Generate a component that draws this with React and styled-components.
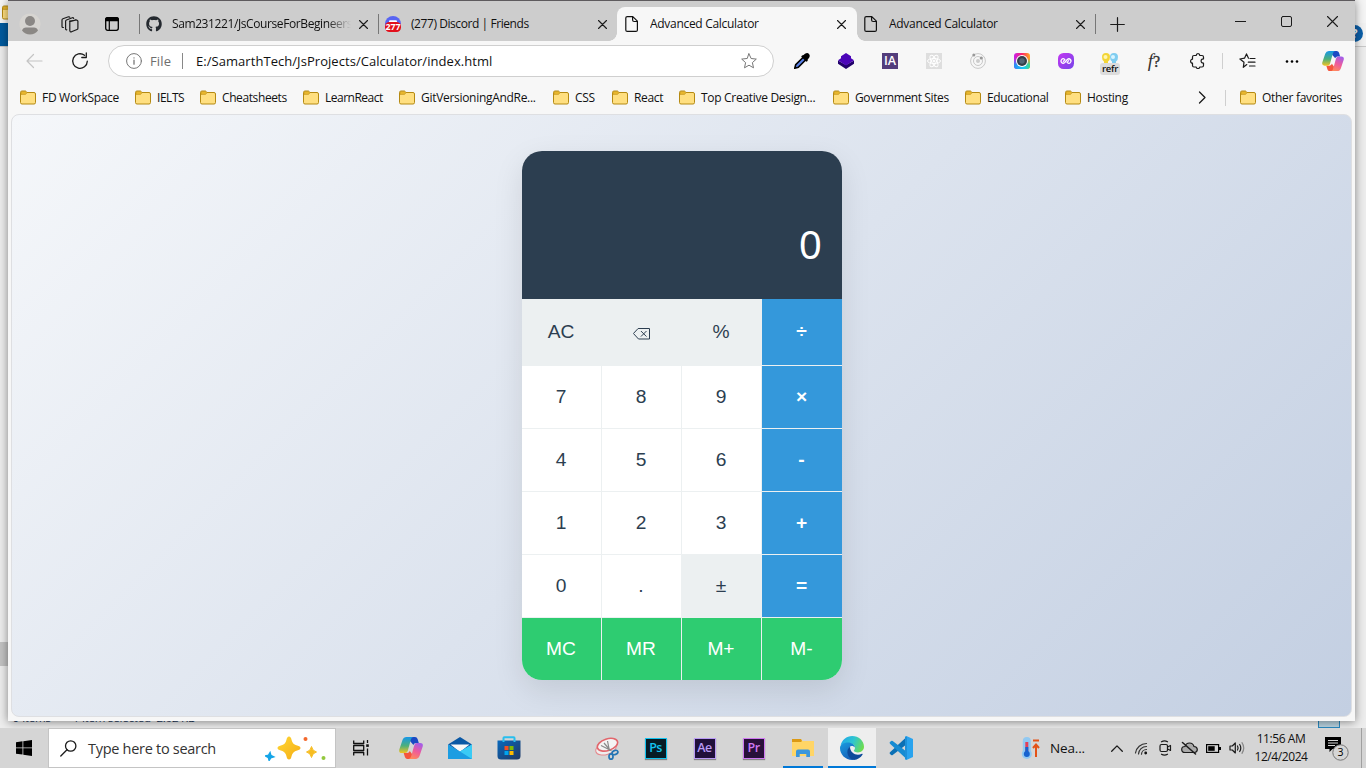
import React from "react";
import styled, { createGlobalStyle } from "styled-components";
import { FaGithub } from "react-icons/fa";

const UI = `"Open Sans", "Noto Sans", sans-serif`;

const GlobalStyle = createGlobalStyle`
  * { box-sizing: border-box; }
  body { margin: 0; overflow: hidden; }
`;

const Screen = styled.div`
  width: 1366px;
  height: 768px;
  display: flex;
  flex-direction: column;
  overflow: hidden;
  font-family: ${UI};
  color: #111;
`;

const Desktop = styled.div`
  position: relative;
  height: 728px;
  overflow: hidden;
`;

/* ---------- window behind the browser ---------- */

const Explorer = styled.div`
  height: 728px;
  display: flex;
  flex-direction: column;
  background: #ededed;
`;

const ExplorerTitle = styled.div`
  height: 23px;
  padding: 3px 0 0 2px;
  background: #f5f5f5;
`;

const ExplorerRibbon = styled.div`
  display: flex;
  justify-content: space-between;
  height: 24px;
  border-bottom: 1px solid #c9c9c9;
  background: linear-gradient(90deg, #005a9e 0 30px, #f2f2f2 30px);
`;

const HelpDot = styled.div`
  width: 17px;
  height: 17px;
  margin: 2px 3px 0 auto;
  border-radius: 50%;
  background: #0b5fa8;
  color: #fff;
  font-size: 12px;
  font-weight: 700;
  line-height: 17px;
  text-align: center;
`;

const ExplorerBody = styled.div`
  flex: 1;
  padding-top: 595px;
`;

const ScrollThumb = styled.div`
  width: 8px;
  height: 24px;
  background: #c2c2c2;
`;

const ExplorerStatus = styled.div`
  display: flex;
  align-items: flex-start;
  height: 18px;
  padding-left: 13px;
  gap: 22px;
  font-size: 11.5px;
  line-height: 16px;
  letter-spacing: -0.2px;
  color: #1e395b;
`;

const ViewToggle = styled.div`
  width: 22px;
  height: 18px;
  margin: 0 26px 0 auto;
  border: 1px solid #2a8ac0;
  background: #b9d3e0;
`;

/* ---------- browser ---------- */

const Browser = styled.div`
  position: absolute;
  left: 8px;
  top: 0;
  width: 1347px;
  height: 721px;
  display: flex;
  flex-direction: column;
  background: #f7f7f7;
  border-top: 1px solid #5e5b5e;
  box-shadow: 0 1px 9px rgba(0, 0, 0, 0.45);
`;

const TabStrip = styled.div`
  display: flex;
  align-items: flex-start;
  height: 40px;
  background: #cdcdcd;
`;

const StripButton = styled.div`
  display: flex;
  align-items: center;
  justify-content: center;
  flex: none;
  width: ${(p) => p.$w}px;
  height: ${(p) => p.$h || 46}px;
  margin-right: ${(p) => p.$gap || 0}px;
`;

const TabBox = styled.div`
  position: relative;
  display: flex;
  flex: none;
  align-items: center;
  width: ${(p) => (p.$active ? 240 : 239)}px;
  height: 34px;
  margin-top: 6px;
  margin-right: ${(p) => (p.$active ? -1 : 0)}px;
  padding-left: 7px;
  border-radius: 8px 8px 0 0;
  background: ${(p) => (p.$active ? "#f7f7f7" : "transparent")};
  &::before {
    content: "";
    display: ${(p) => (p.$line ? "block" : "none")};
    position: absolute;
    left: 0;
    top: 7px;
    width: 1px;
    height: 20px;
    background: #777;
  }
`;

const Flare = styled.div`
  position: absolute;
  bottom: 0;
  ${(p) => (p.$right ? "right: -8px;" : "left: -8px;")}
  width: 8px;
  height: 8px;
  background: radial-gradient(circle at ${(p) => (p.$right ? "100%" : "0")} 0, transparent 7.5px, #f7f7f7 8px);
`;

const TabTitle = styled.div`
  width: 180px;
  margin-left: 10px;
  overflow: hidden;
  white-space: nowrap;
  font-size: 12px;
  line-height: 18px;
  letter-spacing: ${(p) => p.$ls || 0}px;
  ${(p) => p.$fade && "mask-image: linear-gradient(90deg, #000 155px, transparent 179px);"}
`;

const TabEnd = styled.div`
  width: 1px;
  height: 20px;
  margin-top: 13px;
  background: #777;
`;

const WindowControls = styled.div`
  display: flex;
  margin-left: auto;
`;

const Toolbar = styled.div`
  display: flex;
  align-items: center;
  height: 40px;
`;

const Slot = styled.div`
  display: flex;
  align-items: center;
  justify-content: center;
  flex: none;
  width: ${(p) => p.$w || 44}px;
  height: 32px;
  margin-right: ${(p) => p.$gap || 0}px;
`;

const AddressBar = styled.div`
  display: flex;
  flex: none;
  align-items: center;
  width: 666px;
  height: 32px;
  margin: 0 6px;
  padding: 0 16px 0 17px;
  border: 1px solid #cfcfcf;
  border-radius: 16px;
  background: #fff;
  font-size: 13px;
`;

const Scheme = styled.span`
  width: 32px;
  margin-left: 8px;
  color: #6e6e6e;
  letter-spacing: 0.15px;
`;

const Divider = styled.div`
  flex: none;
  width: 1px;
  height: 16px;
  background: ${(p) => p.$c || "#cfcfcf"};
`;

const Url = styled.span`
  flex: 1;
  margin-left: 13px;
  letter-spacing: 0.05px;
`;

const SquareIcon = styled.div`
  width: 16px;
  height: 16px;
  background: #533d7c;
  color: #fff;
  font: 600 12.5px/16px "Open Sans", sans-serif;
  text-align: center;
`;

const RefrIcon = styled.div`
  display: flex;
  flex-direction: column;
  align-items: center;
  padding-top: 5px;
`;

const RefrLabel = styled.div`
  width: 20px;
  height: 12px;
  border-radius: 3px;
  background: #dcdcdc;
  font: 600 9.5px/12px "Open Sans", sans-serif;
  letter-spacing: -0.3px;
  text-align: center;
`;

const Formula = styled.span`
  font: italic 19px/20px "Liberation Serif", serif;
  color: #333;
  b { font-size: 16px; font-weight: 400; font-style: normal; -webkit-text-stroke: 0.4px #333; }
`;

const Bookmarks = styled.div`
  display: flex;
  align-items: center;
  height: 33px;
  padding-left: 12px;
`;

const Bookmark = styled.div`
  display: flex;
  flex: none;
  align-items: center;
  width: ${(p) => p.$w}px;
  gap: 6px;
  white-space: nowrap;
  font-size: 12px;
  letter-spacing: ${(p) => p.$ls}px;
  svg { flex: none; }
`;

const Page = styled.div`
  display: flex;
  justify-content: center;
  align-items: flex-start;
  width: 1341px;
  height: 603px;
  margin-left: 3px;
  padding-top: 36px;
  border: 1px solid #dedfe2;
  border-radius: 8px;
  overflow: hidden;
  background: linear-gradient(135deg, #f5f7fa 0%, #c3cfe2 100%);
`;

/* ---------- calculator ---------- */

const Calculator = styled.div`
  width: 320px;
  height: 529px;
  border-radius: 20px;
  overflow: hidden;
  background: #fff;
  box-shadow: 0 10px 30px rgba(0, 0, 0, 0.1);
  font-family: "Liberation Sans", Arial, sans-serif;
`;

const Display = styled.div`
  display: flex;
  justify-content: flex-end;
  align-items: flex-end;
  height: 148px;
  padding: 0 20px 31px;
  background: #2c3e50;
  color: #fff;
  font-size: 40px;
  line-height: 46px;
`;

const Keys = styled.div`
  display: grid;
  grid-template-columns: repeat(4, 80px);
  grid-template-rows: 67px repeat(4, 63px) 62px;
`;

const keyColors = {
  num: ["#fff", "#2c3e50"],
  fn: ["#ecf0f1", "#2c3e50"],
  op: ["#3498db", "#fff"],
  mem: ["#2ecc71", "#fff"],
};

const Key = styled.button`
  display: flex;
  align-items: center;
  justify-content: center;
  margin: 0;
  padding: 0 0 1px;
  border: 0 solid #ecf0f1;
  border-right-width: ${(p) => (p.$last ? 0 : 1)}px;
  border-bottom-width: ${(p) => (p.$kind === "mem" ? 0 : 1)}px;
  background: ${(p) => keyColors[p.$kind][0]};
  color: ${(p) => keyColors[p.$kind][1]};
  font-family: inherit;
  font-size: 19.2px;
  font-weight: ${(p) => (p.$kind === "op" ? 700 : 400)};
  svg { margin-top: 5px; }
`;

/* ---------- taskbar ---------- */

const Taskbar = styled.div`
  display: flex;
  height: 40px;
  background: #d5d5d5;
`;

const TaskCell = styled.div`
  display: flex;
  flex: none;
  align-items: center;
  justify-content: center;
  width: ${(p) => p.$w || 49}px;
  height: 40px;
`;

const RunningCell = styled.div`
  display: flex;
  flex: none;
  align-items: center;
  justify-content: center;
  width: ${(p) => p.$w}px;
  height: 40px;
  margin: 0 ${(p) => p.$m}px;
  padding-top: 2px;
  border-bottom: 2px solid #0078d7;
  background: ${(p) => (p.$active ? "#eeeeee" : "transparent")};
`;

const Search = styled.div`
  display: flex;
  flex: none;
  align-items: center;
  width: 288px;
  height: 40px;
  padding: 0 8px 0 11px;
  border: 1px solid #c4c4c4;
  background: #fff;
`;

const SearchText = styled.span`
  flex: 1;
  margin-left: 11px;
  font-size: 14.5px;
  letter-spacing: -0.29px;
  white-space: nowrap;
  color: #333;
`;

const AdobeIcon = styled.div`
  width: 22px;
  height: 21px;
  border: 1.5px solid ${(p) => p.$c};
  background: ${(p) => p.$bg};
  color: ${(p) => p.$c};
  box-shadow: 0 1px 1px #888;
  font: 600 12.5px/17px "Open Sans", sans-serif;
  letter-spacing: -0.6px;
  text-align: center;
`;

const Tray = styled.div`
  display: flex;
  align-items: center;
  margin-left: auto;
`;

const Weather = styled.div`
  display: flex;
  align-items: center;
  width: 84px;
  gap: 9px;
  font-size: 13.5px;
  letter-spacing: -0.15px;
`;

const Clock = styled.div`
  width: 64px;
  font-size: 12px;
  line-height: 18px;
  letter-spacing: -0.42px;
  text-align: center;
  white-space: nowrap;
`;

const ShowDesktop = styled.div`
  width: 5px;
  height: 40px;
  border-left: 1px solid #a0a0a0;
`;

/* ---------- drawings ---------- */

const Line = ({ w = 16, h = 16, vb, sw = 1, c = "#1b1b1b", children }) => (
  <svg width={w} height={h} viewBox={vb || `0 0 ${w} ${h}`} fill="none" stroke={c} strokeWidth={sw} strokeLinecap="round" strokeLinejoin="round">
    {children}
  </svg>
);

const Folder = () => (
  <svg width="16" height="15" viewBox="0 0 16 15">
    <path d="M.5 2.500Q.5 1 2 1h3.200q.7 0 1.100.6l.7.9H14q1.500 0 1.500 1.500v8.500q0 1.500-1.500 1.500H2q-1.500 0-1.500-1.500Z" fill="#ffdf80" stroke="#b58a13" />
    <path d="M1 4.400V2.600Q1 1.500 2 1.500h3.100q.5 0 .8.400l.9 1.100-1 1.200q-.2.200-.6.200Z" fill="#e9b72d" stroke="#c0921b" strokeWidth=".6" />
  </svg>
);

const Close = ({ s = 8 }) => (
  <Line w={s + 1} h={s + 1} sw={1.1}><path d={`M.5 .5l${s} ${s}M${s + 0.5} .5l-${s} ${s}`} /></Line>
);

const Doc = () => (
  <Line w={16} h={16} sw={1.2} c="#111"><path d="M3.300.6h5.500L13.400 5.200v8.700q0 1.500-1.500 1.500H3.300q-1.500 0-1.500-1.500V2.100Q1.800.6 3.300.6ZM8.600.8v3.200q0 1.500 1.500 1.500h3.100" /></Line>
);

const Discord = () => (
  <svg width="16" height="16" viewBox="0 0 16 16">
    <circle cx="8" cy="8" r="8" fill="#5865f2" />
    <rect x="4" y="4.200" width="8" height="3" rx="1.200" fill="#fff" />
    <rect x="0" y="6" width="16" height="10" rx="4.500" fill="#e2101c" />
    <text x="8" y="14.200" textAnchor="middle" fontFamily="Open Sans, sans-serif" fontWeight="700" fontSize="8.800" fill="#fff">277</text>
  </svg>
);

const Copilot = ({ s, id }) => (
  <svg width={s} height={s * 0.92} viewBox="0 0 24 22">
    <defs>
      <linearGradient id={`${id}A`} x1="0" y1="0" x2="0" y2="1">
        <stop offset="0" stopColor="#1697e8" /><stop offset=".55" stopColor="#4db07a" /><stop offset="1" stopColor="#f3c321" />
      </linearGradient>
      <linearGradient id={`${id}B`} x1="0.700" y1="0" x2="0.300" y2="1">
        <stop offset="0" stopColor="#a45de8" /><stop offset=".5" stopColor="#ee5b9b" /><stop offset="1" stopColor="#ff8a5c" />
      </linearGradient>
    </defs>
    <path d="M11 0h5q2 0 2.600 2l1.200 4H17q-2 0-2.600 2L11 4Z" fill="#1b49c4" />
    <path d="M13 22H8.500q-2 0-2.600-2l-1.200-4h3.500q2 0 2.600-2L13 17Z" fill="#f5553d" />
    <path d="M7.500 0h6.800q-1.800.4-2.400 2.500L8.800 13.600Q8.200 16 6 16H2.800Q-.5 16 .3 12.500L3.500 3Q4.500 0 7.500 0Z" fill={`url(#${id}A)`} />
    <path d="M16.500 22H9.700q1.800-.4 2.400-2.500l3.100-11.100Q15.800 6 18 6h3.200q3.300 0 2.500 3.500L20.500 19q-1 3-4 3Z" fill={`url(#${id}B)`} />
  </svg>
);

const Backspace = () => (
  <Line w={17} h={12} c="#2c3e50" sw={1}><path d="M5.500.5h11v10.500h-11L.7 5.800ZM8.200 3.300l5 5M13.200 3.300l-5 5" /></Line>
);

const keys = [
  ["AC", "fn"], [<Backspace key="b" />, "fn"], ["%", "fn"], ["÷", "op"],
  ["7", "num"], ["8", "num"], ["9", "num"], ["×", "op"],
  ["4", "num"], ["5", "num"], ["6", "num"], ["-", "op"],
  ["1", "num"], ["2", "num"], ["3", "num"], ["+", "op"],
  ["0", "num"], [".", "num"], ["±", "fn"], ["=", "op"],
  ["MC", "mem"], ["MR", "mem"], ["M+", "mem"], ["M-", "mem"],
];

const bookmarks = [
  ["FD WorkSpace", 115, -0.3], ["IELTS", 65, -0.45], ["Cheatsheets", 103, -0.4], ["LearnReact", 96, -0.5],
  ["GitVersioningAndRe...", 154, -0.3], ["CSS", 59, -0.3], ["React", 67, -0.35], ["Top Creative Design...", 154, -0.3],
  ["Government Sites", 132, -0.38], ["Educational", 100, -0.36], ["Hosting", 113, -0.3],
];

function Tab({ icon, title, active, line, ls, fade }) {
  return (
    <TabBox $active={active} $line={line}>
      {active && <><Flare /><Flare $right /></>}
      {icon}
      <TabTitle $ls={ls} $fade={fade}>{title}</TabTitle>
      <StripButton $w={22} $h={34}><Close /></StripButton>
    </TabBox>
  );
}

function Extensions() {
  return (
    <>
      <Slot>
        <svg width="16" height="16" viewBox="0 0 16 16">
          <path d="M9.500 4 1.700 11.700.8 15.200l3.500-.9L12 6.500Z" fill="#5b82e8" stroke="#000" strokeWidth="1.600" />
          <path d="m8 2.600 1.500-.5L11 .8q2.500-1.500 4 .2t0 4L13.800 6.200l-.2 1.800-1.300.8L7.200 3.700Z" />
        </svg>
      </Slot>
      <Slot>
        <svg width="16" height="16" viewBox="0 0 16 16">
          <path d="M0 7.500v3.200L8 16l8-5.300V7.500L8 12Z" fill="#21006b" />
          <path d="M8 0l5 3.200v2L16 7.300l-8 5.200L0 7.300l3-2.100v-2Z" fill="#4b05b8" />
        </svg>
      </Slot>
      <Slot><SquareIcon>IA</SquareIcon></Slot>
      <Slot>
        <svg width="16" height="16" viewBox="0 0 16 16" fill="none" stroke="#fff">
          <rect width="16" height="16" fill="#dedede" stroke="none" />
          <ellipse cx="8" cy="8" rx="6.500" ry="2.500" /><ellipse cx="8" cy="8" rx="6.500" ry="2.500" transform="rotate(60 8 8)" /><ellipse cx="8" cy="8" rx="6.500" ry="2.500" transform="rotate(120 8 8)" />
          <circle cx="8" cy="8" r="1" fill="#fff" />
        </svg>
      </Slot>
      <Slot>
        <svg width="16" height="16" viewBox="0 0 16 16" fill="none" stroke="#c8c8c8">
          <circle cx="8" cy="8" r="7.400" /><circle cx="8" cy="8" r="4.500" /><circle cx="8" cy="8" r="2" fill="#ccc" stroke="none" />
          <circle cx="3.800" cy="2" r="1.500" fill="#999" stroke="none" /><circle cx="11.300" cy="5" r="1.600" fill="#999" stroke="none" />
        </svg>
      </Slot>
      <Slot>
        <svg width="16" height="16" viewBox="0 0 16 16">
          <defs>
            <linearGradient id="cam" x1="0" y1="0" x2="1" y2="0"><stop offset="0" stopColor="#c421ee" /><stop offset=".5" stopColor="#ff2465" /><stop offset="1" stopColor="#ffad22" /></linearGradient>
            <linearGradient id="camB" x1="0" y1="0" x2="1" y2="0"><stop offset="0" stopColor="#2a8cf5" /><stop offset=".6" stopColor="#16c9f5" /><stop offset="1" stopColor="#40d987" /></linearGradient>
            <linearGradient id="camFade" x1="0" y1="0" x2="0" y2="1"><stop offset=".35" stopColor="#000" /><stop offset=".75" stopColor="#fff" /></linearGradient>
            <mask id="camMask"><rect width="16" height="16" fill="url(#camFade)" /></mask>
          </defs>
          <rect width="16" height="16" rx="3" fill="url(#cam)" /><rect width="16" height="16" rx="3" fill="url(#camB)" mask="url(#camMask)" />
          <circle cx="8" cy="8" r="6" fill="#fff" /><circle cx="8" cy="8" r="5" fill="#353f49" /><circle cx="8" cy="8" r="2.700" fill="#526675" />
        </svg>
      </Slot>
      <Slot>
        <svg width="16" height="16" viewBox="0 0 16 16" fill="none" stroke="#fff" strokeWidth="1.200" strokeLinecap="round">
          <defs><linearGradient id="pur" x1="0" y1="0" x2="1" y2="1"><stop stopColor="#c437f2" /><stop offset="1" stopColor="#7545e8" /></linearGradient></defs>
          <rect width="16" height="16" rx="5.500" fill="url(#pur)" stroke="none" />
          <path d="M5.300 8.300 7 6.600M8 8 6.700 9.500Q5 11 3.600 9.500T3.800 6.300Q5 5.200 6.500 6.200M8 8l1.300-1.500Q11 5 12.400 6.500t-.2 3.200Q11 10.800 9.500 9.800M10.700 7.700 9 9.400" />
        </svg>
      </Slot>
      <Slot>
        <RefrIcon>
          <svg width="16" height="10" viewBox="0 0 16 10">
            <path d="M0 4q0-4 4-4t4 4q0 3.500-2 4.500v1.500h-4V8.500Q0 7.500 0 4Z" fill="#f3d536" /><path d="M8 4q0-4 4-4t4 4q0 3.500-2 4.500v1.500h-4V8.500Q8 7.500 8 4Z" fill="#7fcdf0" />
            <circle cx="3.500" cy="4" r="2" fill="#fff5b0" /><circle cx="11" cy="4" r="2" fill="#d9f4ff" />
          </svg>
          <RefrLabel>refr</RefrLabel>
        </RefrIcon>
      </Slot>
      <Slot><Formula>f<b>?</b></Formula></Slot>
      <Slot $gap={2}>
        <Line sw={1.2}><path d="M4 2.500h2.200C6.200 1.300 7 .6 8 .6s1.800.7 1.800 1.900H12q1.500 0 1.500 1.500v2c-1.700-.2-2.400.8-2.400 2s.7 2.200 2.400 2v2.500q0 1.500-1.500 1.500H9.800c0 .9-.8 1.500-1.800 1.500S6.200 14.900 6.200 14H4q-1.500 0-1.500-1.500v-2.300C1.200 10.200.6 9.200.6 8.200s.7-2 1.900-2V4Q2.500 2.500 4 2.500Z" /></Line>
      </Slot>
      <Divider />
    </>
  );
}

function TaskIcons() {
  return (
    <>
      <TaskCell $w={50}>
        <Line w={16} h={16} sw={1.300} c="#111"><path d="M.7.500v3h10v-3M.7 15.500v-3h10v3M.7 5.500h10v5H.7ZM14.500 0v3M14.500 8.500V15.500" strokeLinecap="butt" /><rect x="13.200" y="4.300" width="2.600" height="2.600" fill="#111" stroke="none" /></Line>
      </TaskCell>
      <TaskCell><Copilot s={24} id="task" /></TaskCell>
      <TaskCell>
        <svg width="24" height="22" viewBox="0 0 24 22">
          <path d="M0 7.500 12 0l12 7.500-12 8Z" fill="#0a58a5" /><path d="M2.500 7.500h19L12 15Z" fill="#f7f7f7" />
          <path d="M0 7.500V22h24V7.500l-12 7Z" fill="#1c9de2" /><path d="m12 14.500 12-7V22Z" fill="#3acbf5" />
        </svg>
      </TaskCell>
      <TaskCell>
        <svg width="24" height="24" viewBox="0 0 24 24">
          <defs><linearGradient id="st" x1="0" y1="0" x2="1" y2="1"><stop stopColor="#0869bd" /><stop offset="1" stopColor="#213864" /></linearGradient></defs>
          <path d="M.5 4.500h23V20q0 3.500-3.500 3.500H4Q.5 23.500.5 20Z" fill="url(#st)" />
          <path d="M7.500 10h4v4h-4Z" fill="#f25022" /><path d="M12.500 10h4v4h-4Z" fill="#7fba00" /><path d="M7.500 15h4v4h-4Z" fill="#00a4ef" /><path d="M12.500 15h4v4h-4Z" fill="#ffb900" />
          <path d="M6.500 6V2q0-.8.800-.8h9.400q.8 0 .8.800v4" fill="none" stroke="#29bfee" strokeWidth="2" />
        </svg>
      </TaskCell>
      <TaskCell />
      <TaskCell>
        <svg width="24" height="23" viewBox="0 0 24 23" fill="none">
          <ellipse cx="11" cy="11.500" rx="10.600" ry="6" transform="rotate(-18 11 11.500)" stroke="#e58a8f" fill="#eee" />
          <ellipse cx="12.500" cy="7.700" rx="10.500" ry="5.800" transform="rotate(-18 12.500 7.700)" stroke="#e2666c" strokeWidth="1.600" fill="#f4f4f4" />
          <path d="m12.500 4 2 10M6 8.500l10.500 5.200M9 6l6 7" stroke="#8a8a8a" strokeWidth="1.200" />
          <ellipse cx="20" cy="15.500" rx="3" ry="2" transform="rotate(-20 20 15.500)" stroke="#2475b4" strokeWidth="1.700" />
          <ellipse cx="16" cy="19.500" rx="2" ry="2.700" stroke="#2475b4" strokeWidth="1.700" />
        </svg>
      </TaskCell>
      <TaskCell><AdobeIcon $c="#13c4f0" $bg="#061c26">Ps</AdobeIcon></TaskCell>
      <TaskCell><AdobeIcon $c="#b99af5" $bg="#20103a">Ae</AdobeIcon></TaskCell>
      <TaskCell><AdobeIcon $c="#cf79f2" $bg="#29103a">Pr</AdobeIcon></TaskCell>
      <RunningCell $w={40} $m={5}>
        <svg width="22" height="18" viewBox="0 0 22 18">
          <path d="M0 0h9l1.500 2H22v15H0Z" fill="#ffd566" /><path d="M0 0h9l1 2-1 1H0Z" fill="#dc9a14" />
          <path d="M4 18v-5.500q0-2 2-2h10q2 0 2 2V18h-3.700v-3H7.700v3Z" fill="#3a96dc" />
        </svg>
      </RunningCell>
      <RunningCell $w={48} $m={0} $active>
        <svg width="24" height="24" viewBox="0 0 24 24">
          <defs>
            <linearGradient id="eA" x1="0" y1=".3" x2="1" y2=".6"><stop stopColor="#20a8e8" /><stop offset=".5" stopColor="#2fc5d0" /><stop offset="1" stopColor="#6fdd4c" /></linearGradient>
            <linearGradient id="eB" x1="0" y1="0" x2="0.500" y2="1"><stop stopColor="#1a9ce0" /><stop offset="1" stopColor="#1461b9" /></linearGradient>
          </defs>
          <path d="M.6 9.500C1.800 4 6.500 0 12.200 0 18.500 0 24 4.700 24 10.800c0 3.400-2.700 5.600-6 5.600-2.600 0-4.200-1-4.200-1.700 0-.6 1.200-1.100 1.200-3C15 9.300 12.300 7.200 8.800 7.200 4.800 7.200 1.500 8.700.6 9.500Z" fill="url(#eA)" />
          <path d="M0 12C0 8.600 3.700 6.500 8 6.500c3.600 0 6.800 2.300 6.900 5.100-1-1.700-3-2-4.300-1.300-3.300 1.800-3.300 11.200 3.400 13.500C6 24.700 0 19 0 12Z" fill="url(#eB)" />
          <path d="M10 10.600c-5 3.800-2.500 12.500 4 13.300 3.500-.3 6.700-2.300 8.600-5.500.3-.6-.2-.9-.7-.6-4.800 2.600-11.900 0-11.900-7.200Z" fill="#0c4a9a" />
        </svg>
      </RunningCell>
      <TaskCell>
        <svg width="24" height="24" viewBox="0 0 24 24">
          <path d="M17.500 1 1 16.200q-.9.900 0 1.700l1.200 1.200q.7.500 1.500 0L18 8Z" fill="#0b70b5" />
          <path d="M17.500 23 1 7.800q-.9-.9 0-1.700l1.200-1.200q.7-.5 1.500 0L18 16Z" fill="#168bd2" />
          <path d="M17.400 0 24 3v18l-6.600 3q-.8 0-1.400-.8l2-.9V1.700l-2-.9q.5-.8 1.400-.8Z" fill="#29a3ee" /><path d="M16 1q1-.7 2 0v22q-1 .7-2 0Z" fill="#1e8fd8" />
        </svg>
      </TaskCell>
    </>
  );
}

export default function App() {
  return (
    <Screen>
      <GlobalStyle />
      <Desktop>
        <Explorer>
          <ExplorerTitle><Folder /></ExplorerTitle>
          <ExplorerRibbon><HelpDot>?</HelpDot></ExplorerRibbon>
          <ExplorerBody><ScrollThumb /></ExplorerBody>
          <ExplorerStatus><span>9 items</span><span>1 item selected&nbsp; 2.02 KB</span><ViewToggle /></ExplorerStatus>
        </Explorer>

        <Browser>
          <TabStrip>
            <StripButton $w={44}>
              <svg width="22" height="22" viewBox="0 0 22 22">
                <circle cx="11" cy="11" r="10.600" fill="#d7d5d1" /><circle cx="11" cy="8" r="5" fill="#8b8885" /><path d="M3 17.500q1-3 4-3h8q3 0 4 3-3 4-8 4t-8-4Z" fill="#8b8885" />
              </svg>
            </StripButton>
            <StripButton $w={36}>
              <Line w={18} h={17} sw={1.2}><path d="M8.500 5.200 15.500 4q1.200 0 1.400 1.200v7q0 1-.9 1.300l-5.500 2.300q-1.500.4-1.700-1.100V6.500q0-.9.900-1.200L15 3.800M5.800 13.800q-1.200.2-1.200-1.100V5.300q0-.9.900-1.300l5.800-2.200q1-.3 1.400.7M2.500 11.500q-1.500.2-1.500-1.300V4q0-.9.900-1.300L7.500.8q1-.2 1.300.5" /></Line>
            </StripButton>
            <StripButton $w={48} $gap={3}>
              <svg width="14" height="14" viewBox="0 0 14 14"><rect x=".7" y=".7" width="12.600" height="12.600" rx="2" fill="none" stroke="#000" strokeWidth="1.300" /><path d="M0 4.300V2.500Q0 0 2.500 0h9Q14 0 14 2.500v1.800Z" /><path d="M4.300 4v9.500" stroke="#000" strokeWidth="1.200" /></svg>
            </StripButton>
            <Tab line fade ls={-0.4} icon={<FaGithub size={16} color="#24292f" />} title="Sam231221/JsCourseForBegineers" />
            <Tab line ls={-0.43} icon={<Discord />} title="(277) Discord | Friends" />
            <Tab active ls={-0.3} icon={<Doc />} title="Advanced Calculator" />
            <Tab ls={-0.3} icon={<Doc />} title="Advanced Calculator" />
            <TabEnd />
            <StripButton $w={43}><Line w={15} h={15} sw={1.2}><path d="M7.500 .7v13.600M.7 7.500h13.600" /></Line></StripButton>
            <WindowControls>
              <StripButton $w={46} $h={40}><Line w={11} h={1}><path d="M0 .5h11" /></Line></StripButton>
              <StripButton $w={46} $h={40}><Line w={11} h={11}><rect x=".5" y=".5" width="10" height="10" rx="1.500" /></Line></StripButton>
              <StripButton $w={46} $h={40}><Close s={10} /></StripButton>
            </WindowControls>
          </TabStrip>

          <Toolbar>
            <Slot $w={50}><Slot $w={3} /><Line w={17} h={16} c="#c4c4c4" sw={1.2}><path d="M1 8h15M7.500 1.500 1 8l6.500 6.500" /></Line></Slot>
            <Slot><Line w={18} h={18} sw={1.3}><path d="M16.300 9.200A7.300 7.300 0 1 1 13.500 3.300M15.300 1v4.500h-4.500" /></Line></Slot>
            <AddressBar>
              <Line w={16} h={16} c="#777"><circle cx="8" cy="8" r="7.400" /><path d="M8 7.200v4M8 4.800v.1" strokeWidth="1.300" /></Line>
              <Scheme>File</Scheme>
              <Divider $c="#888" />
              <Url>E:/SamarthTech/JsProjects/Calculator/index.html</Url>
              <Line w={16} h={16} c="#777"><path d="m8 .8 2.100 4.700 5.200.6-3.900 3.500 1.100 5.200L8 12.200l-4.500 2.600 1.100-5.200L.7 6.100l5.200-.6Z" /></Line>
            </AddressBar>
            <Extensions />
            <Slot $w={48}><Line w={17} h={16} sw={1.2}><path d="M7.800 11.600 4.300 14.300l.7-5L.9 6l4.600-.8L7.500.9l2 4.300M11 5.500h5M9.300 9.200H16M10.500 13H16" /></Line></Slot>
            <Slot $w={41}><svg width="14" height="3"><circle cx="2" cy="1.500" r="1.300" /><circle cx="7" cy="1.500" r="1.300" /><circle cx="12" cy="1.500" r="1.300" /></svg></Slot>
            <Slot $w={42}><Copilot s={22} id="bar" /></Slot>
          </Toolbar>

          <Bookmarks>
            {bookmarks.map(([name, w, ls]) => (
              <Bookmark key={name} $w={w} $ls={ls}><Folder />{name}</Bookmark>
            ))}
            <Slot $w={47}><Line w={8} h={13} sw={1.3}><path d="m1.500 1 5.500 5.500L1.500 12" /></Line></Slot>
            <Divider />
            <Slot $w={14} />
            <Bookmark $w={108} $ls={-0.3}><Folder />Other favorites</Bookmark>
          </Bookmarks>

          <Page>
            <Calculator>
              <Display>0</Display>
              <Keys>
                {keys.map(([label, kind], i) => (
                  <Key key={i} $kind={kind} $last={i % 4 === 3}>{label}</Key>
                ))}
              </Keys>
            </Calculator>
          </Page>
        </Browser>
      </Desktop>

      <Taskbar>
        <TaskCell $w={48}>
          <svg width="16" height="16" viewBox="0 0 16 16"><path d="M0 2.200 6.500 1.300v6.200H0ZM7.300 1.200 16 0v7.500H7.300ZM0 8.300h6.500v6.300L0 13.700ZM7.300 8.300H16V16l-8.700-1.300Z" /></svg>
        </TaskCell>
        <Search>
          <Line w={17} h={17} sw={1.3}><circle cx="10.700" cy="6" r="5.200" /><path d="M7 9.700.8 16" /></Line>
          <SearchText>Type here to search</SearchText>
          <svg width="62" height="26" viewBox="0 0 62 26">
            <defs><linearGradient id="gold" x1="0" y1="0" x2="1" y2="1"><stop stopColor="#ffd735" /><stop offset="1" stopColor="#f5ad15" /></linearGradient></defs>
            <path d="M24 1.500q2 0 2.600 3.500 1 4.500 5.500 5.500 3.400.7 3.400 2.500t-3.400 2.500q-4.500 1-5.500 5.500-.6 3.500-2.600 3.500T21.400 21q-1-4.500-5.500-5.500-3.400-.7-3.400-2.500t3.400-2.500q4.500-1 5.500-5.500.6-3.500 2.600-3.500Z" fill="url(#gold)" />
            <path d="M46.500 11.500q.8 4.500 5 5.500-4.200 1-5 5.500-.8-4.500-5-5.500 4.200-1 5-5.500Z" fill="#f7bd22" stroke="#f7bd22" />
            <path d="m5 18 .7 2.600 2.500 1.200-2.500.8-1.500 2.400-.7-2.600L1 21l2.600-.6Z" fill="#15a5e8" stroke="#15a5e8" strokeWidth="1.800" />
            <circle cx="40.500" cy="4" r="2" fill="#f3682d" /><circle cx="58.500" cy="23" r="2" fill="#93c83e" />
          </svg>
        </Search>
        <TaskIcons />

        <Tray>
          <Weather>
            <svg width="20" height="22" viewBox="0 0 20 22">
              <rect x="1.800" y="0" width="8" height="18" rx="4" fill="#91c9f2" /><circle cx="5.800" cy="17" r="5" fill="#91c9f2" />
              <path d="M5.800 5v10" stroke="#e33f59" strokeWidth="3" /><path d="M5.800 10v7" stroke="#1763cf" strokeWidth="3" /><circle cx="5.800" cy="17" r="3" fill="#1763cf" />
              <path d="M12 3.500h6" stroke="#e35217" strokeWidth="2" /><path d="M15 20V8M12 11l3-3.500 3 3.500" fill="none" stroke="#e35217" strokeWidth="2" />
            </svg>
            Nea...
          </Weather>
          <TaskCell $w={24}><Line w={12} h={7} sw={1.3}><path d="m.7 6.200 5.300-5.300 5.300 5.300" /></Line></TaskCell>
          <TaskCell $w={24}>
            <Line w={14} h={14} sw={1.2} c="#333"><path d="M1.500 12A11 11 0 0 1 12.500 2.500M4.500 13A8 8 0 0 1 12.500 5.500M7.500 13.200A5 5 0 0 1 12.500 8.500" /><circle cx="11.700" cy="12" r="1.400" fill="#111" stroke="none" /></Line>
          </TaskCell>
          <TaskCell $w={24}>
            <Line w={13} h={16} sw={1.2}><rect x="1" y="4.500" width="7.500" height="7" rx="1.500" /><path d="m8.500 7 3-1.500v5l-3-1.500M2.500 1.800Q5.500 0 8.500 1.800M2.500 14.200q3 1.800 6 0" /></Line>
          </TaskCell>
          <TaskCell $w={24}>
            <Line w={17} h={14} sw={1.2}><path d="M4 11.500Q.7 11.500.7 8.500t3.300-3Q5 2 8.500 2T13 5.500q3.300.3 3.300 3t-3 3Z" fill="#aaa" /><path d="m1.500 1.500 13 11.500" strokeWidth="1.500" /></Line>
          </TaskCell>
          <TaskCell $w={24}>
            <svg width="15" height="9" viewBox="0 0 15 9"><rect x=".6" y=".6" width="12" height="7.800" fill="none" stroke="#000" strokeWidth="1.200" /><rect x="2.200" y="2.200" width="6.500" height="4.600" /><rect x="13" y="3" width="2" height="3" /></svg>
          </TaskCell>
          <TaskCell $w={24}>
            <Line w={17} h={14} sw={1.2}><path d="M1 5h2.300l3-3v10l-3-3H1ZM8.500 5q1.200 2 0 4M10.700 3.500q2.200 3.500 0 7" /><path d="M13 1.700q3.500 5.300 0 10.600" stroke="#888" /></Line>
          </TaskCell>
          <Clock>11:56 AM<br />12/4/2024</Clock>
          <TaskCell $w={48}>
            <svg width="26" height="26" viewBox="0 0 26 26">
              <path d="M1 2h16v12H8.500L5.500 17v-3H1Z" /><path d="M4 5.500h10M4 8h10M4 10.500h7" stroke="#d5d5d5" />
              <circle cx="16.500" cy="17.500" r="7.700" fill="#d5d5d5" stroke="#777" />
              <text x="16.500" y="21.300" fontFamily="Open Sans, sans-serif" fontSize="10.500" textAnchor="middle">3</text>
            </svg>
          </TaskCell>
          <ShowDesktop />
        </Tray>
      </Taskbar>
    </Screen>
  );
}
